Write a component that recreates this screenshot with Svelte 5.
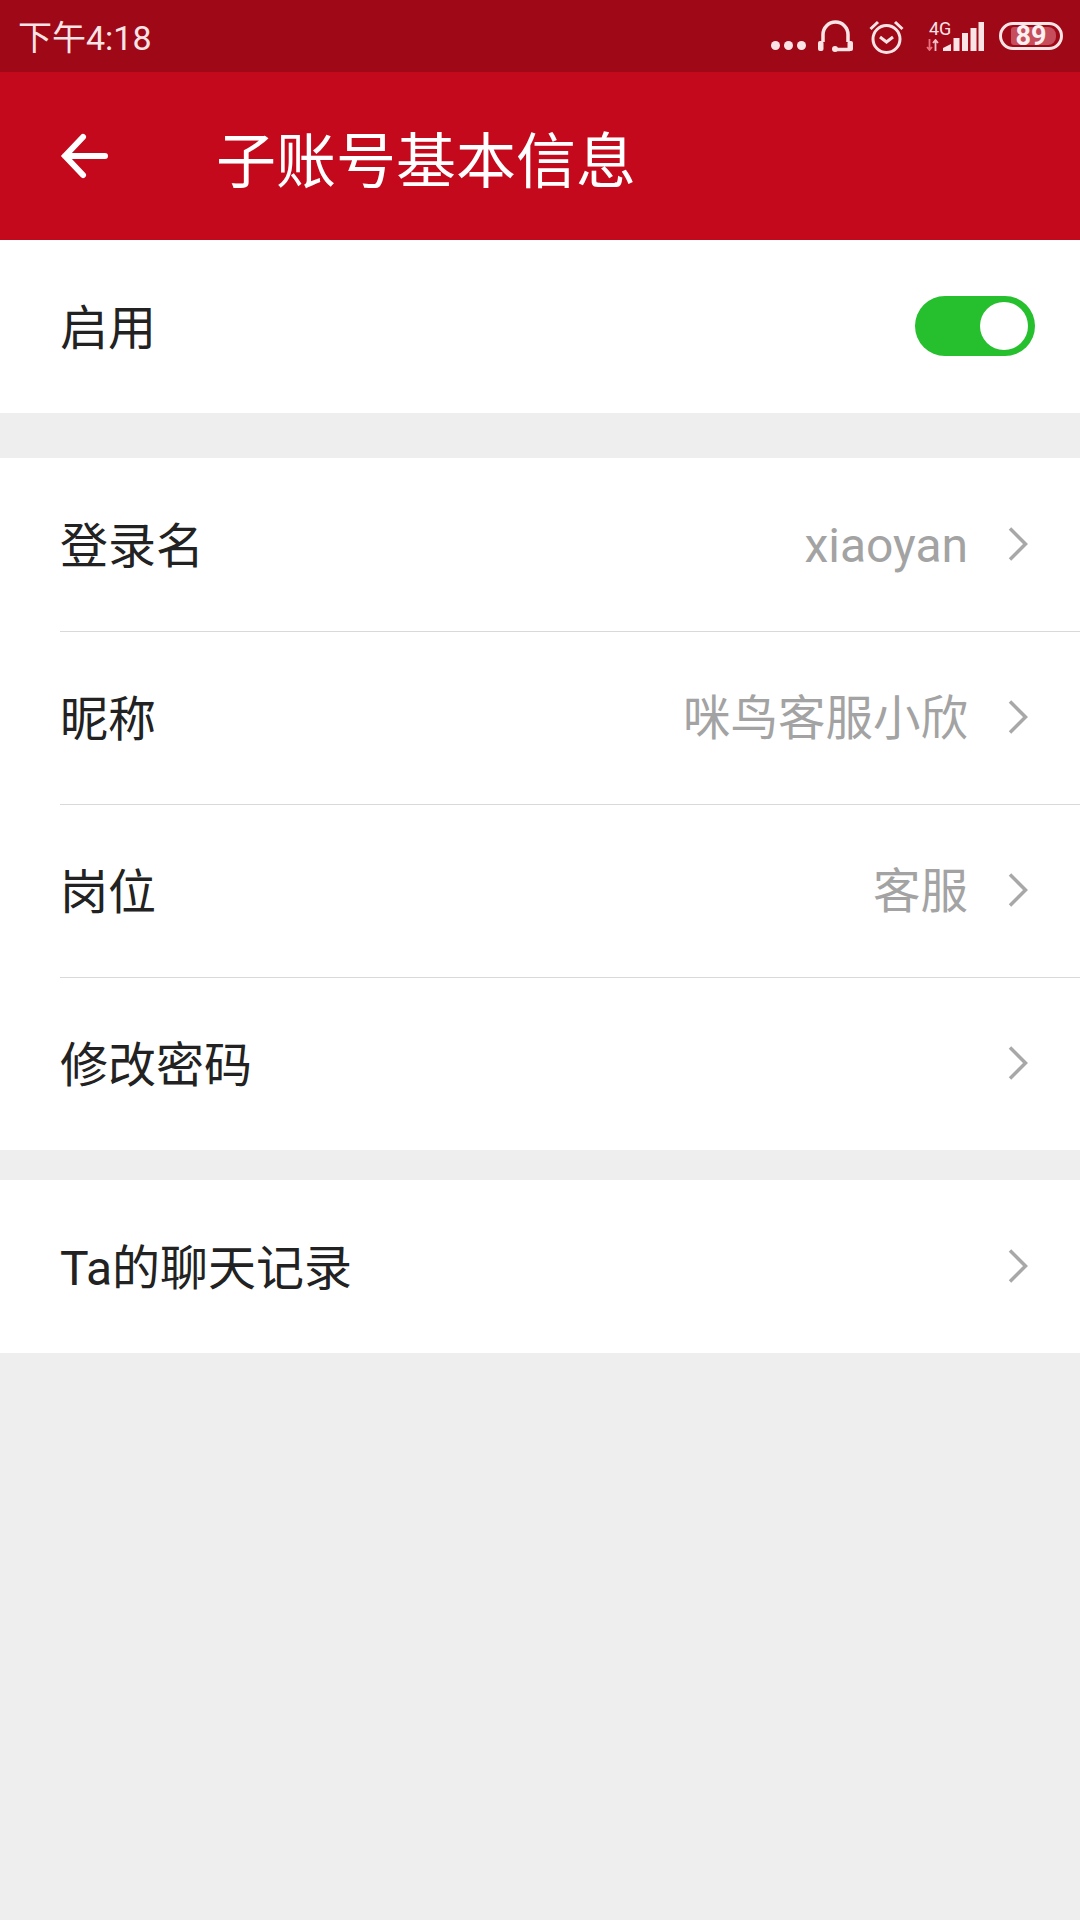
<script>
	const groups = [
		[
			{ label: '登录名', value: 'xiaoyan', latin: true },
			{ label: '昵称', value: '咪鸟客服小欣' },
			{ label: '岗位', value: '客服' },
			{ label: '修改密码', value: '' }
		],
		[{ label: 'Ta的聊天记录', value: '' }]
	];
</script>

<div class="page">
	<div class="status">
		<span class="time">下午4:18</span>
		<div class="status-icons">
			<svg width="35" height="9" viewBox="0 0 35 9" class="dots">
				<circle cx="4.5" cy="4.5" r="4.5" />
				<circle cx="17.5" cy="4.5" r="4.5" />
				<circle cx="30.5" cy="4.5" r="4.5" />
			</svg>
			<svg width="35" height="33" viewBox="0 0 35 33" class="headset">
				<path d="M5 22V14.5a12.5 12.5 0 0 1 25 0V22" />
				<path d="M18 29.5h14" />
				<rect x="0" y="21" width="5.5" height="10" rx="2" class="solid" />
				<rect x="29.5" y="21" width="5.5" height="10" rx="2" class="solid" />
				<circle cx="17" cy="29" r="3" class="solid" />
			</svg>
			<svg width="35" height="35" viewBox="0 0 35 35" class="alarm">
				<circle cx="17.5" cy="20" r="13.5" />
				<path d="M11 18l6.5 5 6.5-5" />
				<path d="M1.5 10L9 3M33.5 10L26 3" />
			</svg>
			<div class="signal">
				<div class="net">
					<span class="gen">4G</span>
					<svg width="13" height="12" viewBox="0 0 13 12">
						<path d="M3.5 0v11M1 8l2.5 3L6 8" class="down" />
						<path d="M9.5 12V1M7 4l2.5-3L12 4" class="up" />
					</svg>
				</div>
				<svg width="41" height="29" viewBox="0 0 41 29" class="bars">
					<path d="M0 29v-3l8-4v7z" />
					<rect x="10.5" y="16" width="6" height="13" />
					<rect x="19" y="11" width="6" height="18" />
					<rect x="27.5" y="6" width="6" height="23" />
					<rect x="35.5" y="0" width="5.5" height="29" />
				</svg>
			</div>
			<div class="battery"><span class="level"></span><span class="pct">89</span></div>
		</div>
	</div>

	<header>
		<svg width="50" height="50" viewBox="0 0 50 50" class="back">
			<path d="M47 25H7M25 6L7 25l18 19" />
		</svg>
		<h1>子账号基本信息</h1>
	</header>

	<section>
		<div class="row">
			<span class="label">启用</span>
			<div class="switch"><span class="knob"></span></div>
		</div>
	</section>

	{#each groups as group, g}
		<section class={g == 0 ? 'first' : 'second'}>
			{#each group as item, i}
				<div class="row link" class:ruled={i < group.length - 1}>
					<span class="label">{item.label}</span>
					<span class="value" class:latin={item.latin}>{item.value}</span>
					<svg width="20" height="36" viewBox="0 0 20 36" class="chev">
						<path d="M2 2.5L17.5 18 2 33.5" />
					</svg>
				</div>
			{/each}
		</section>
	{/each}
</div>

<style>
	:global(body) {
		margin: 0;
		background: #eeeeee;
	}

	.page {
		min-height: 1920px;
		background: #eeeeee;
		font-family: Roboto, 'Noto Sans CJK SC', sans-serif;
	}

	.status {
		height: 72px;
		background: #9e0817;
		color: #fbe4e6;
		display: flex;
		align-items: center;
		justify-content: space-between;
		padding: 0 17px 0 18px;
	}

	.time {
		font-size: 34px;
		margin-bottom: 2px;
	}

	.status-icons {
		display: flex;
		align-items: center;
	}

	.status-icons svg {
		display: block;
	}

	.dots {
		fill: #fbe4e6;
		margin: 19px 12px 0 0;
	}

	.headset {
		margin-right: 16px;
		margin-top: 1px;
	}

	.headset path {
		fill: none;
		stroke: #fbe4e6;
		stroke-width: 3.5;
	}

	.headset .solid {
		fill: #fbe4e6;
	}

	.alarm {
		margin-right: 22px;
	}

	.alarm circle,
	.alarm path {
		fill: none;
		stroke: #fbe4e6;
		stroke-width: 3;
	}

	.signal {
		display: flex;
		margin-right: 15px;
	}

	.net {
		width: 26px;
		height: 29px;
		margin-right: -9px;
		display: flex;
		flex-direction: column;
		justify-content: space-between;
	}

	.gen {
		font-size: 18px;
		line-height: 13px;
		padding-left: 3px;
		white-space: nowrap;
	}

	.net path {
		fill: none;
		stroke-width: 1.8;
	}

	.net .down {
		stroke: #e8717d;
	}

	.net .up {
		stroke: #f3c2c7;
	}

	.bars {
		fill: #fbe4e6;
	}

	.battery {
		position: relative;
		box-sizing: border-box;
		width: 64px;
		height: 28px;
		border: 3px solid #fbe4e6;
		border-radius: 14px;
		padding: 2px;
		margin-bottom: 1px;
		display: flex;
	}

	.level {
		display: block;
		width: 45px;
		margin-left: 7px;
		background: #c64d5b;
		border-radius: 3px 8px 8px 3px;
	}

	.pct {
		position: absolute;
		inset: -3px 0 0;
		text-align: center;
		font-size: 27px;
		line-height: 28px;
		font-weight: 700;
		color: #fdf0f1;
	}

	header {
		height: 168px;
		background: #c4091d;
		color: #fff;
		display: flex;
		align-items: center;
		padding-left: 58px;
	}

	.back {
		margin-right: 108px;
	}

	.back path {
		fill: none;
		stroke: #fff;
		stroke-width: 6;
		stroke-linecap: round;
	}

	h1 {
		margin: 0;
		font-size: 60px;
		font-weight: 400;
	}

	section {
		background: #fff;
	}

	section.first {
		margin-top: 45px;
	}

	section.second {
		margin-top: 30px;
	}

	.row {
		position: relative;
		height: 173px;
		display: flex;
		align-items: center;
		padding: 0 52px 0 60px;
		box-sizing: border-box;
	}

	.row.ruled::after {
		content: '';
		position: absolute;
		left: 60px;
		right: 0;
		bottom: -1px;
		height: 1px;
		background: #d9d9d9;
		z-index: 1;
	}

	.label {
		font-size: 48px;
		color: #222;
		flex: 1;
		margin-bottom: 6px;
	}

	.value {
		font-size: 47.5px;
		color: #a3a3a3;
		margin-right: 40px;
		margin-bottom: 6px;
	}

	.value.latin {
		font-size: 48px;
		margin-bottom: 0;
		margin-top: 2px;
	}

	.chev {
		display: block;
		margin-bottom: 2px;
	}

	.chev path {
		fill: none;
		stroke: #a8a8a8;
		stroke-width: 3.5;
	}

	.switch {
		width: 120px;
		height: 60px;
		margin: 0 -7px 1px 0;
		border-radius: 30px;
		background: #26bf2d;
		display: flex;
		align-items: center;
		justify-content: flex-end;
		padding-right: 7px;
		box-sizing: border-box;
	}

	.knob {
		width: 48px;
		height: 48px;
		border-radius: 50%;
		background: #fff;
	}
</style>
